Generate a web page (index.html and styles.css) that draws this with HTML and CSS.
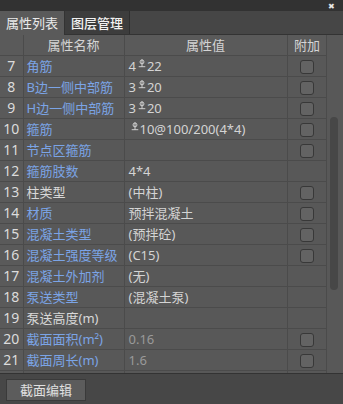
FILE: index.html
```html
<!doctype html>
<html>
<head>
<meta charset="UTF-8">
<title>属性列表</title>
<link rel="stylesheet" href="styles.css">
</head>
<body>
<div class="paneeli">
    <div class="otsikko"><span class="sulje">&#x2716;</span></div>

    <div class="valilehdet">
        <div class="valilehti aktiivinen">属性列表</div>
        <div class="valilehti">图层管理</div>
    </div>

    <div class="taulualue">
        <div class="taulukehys">
            <table class="ominaisuudet">
                <colgroup>
                    <col class="sarakeNro">
                    <col class="sarakeNimi">
                    <col class="sarakeArvo">
                    <col class="sarakeLisa">
                </colgroup>
                <tr class="otsakerivi">
                    <th></th>
                    <th>属性名称</th>
                    <th>属性值</th>
                    <th>附加</th>
                </tr>
                <tr><td class="nro">7</td><td class="nimi linkki">角筋</td><td class="arvo">4<svg class="teras" viewBox="0 0 9 10"><circle cx="4.5" cy="3.2" r="2.2"/><path d="M4.5 0.3V8.6M0.8 8.6H8.2"/></svg>22</td><td class="lisa"><span class="ruutu"></span></td></tr>
                <tr><td class="nro">8</td><td class="nimi linkki">B边一侧中部筋</td><td class="arvo">3<svg class="teras" viewBox="0 0 9 10"><circle cx="4.5" cy="3.2" r="2.2"/><path d="M4.5 0.3V8.6M0.8 8.6H8.2"/></svg>20</td><td class="lisa"><span class="ruutu"></span></td></tr>
                <tr><td class="nro">9</td><td class="nimi linkki">H边一侧中部筋</td><td class="arvo">3<svg class="teras" viewBox="0 0 9 10"><circle cx="4.5" cy="3.2" r="2.2"/><path d="M4.5 0.3V8.6M0.8 8.6H8.2"/></svg>20</td><td class="lisa"><span class="ruutu"></span></td></tr>
                <tr><td class="nro">10</td><td class="nimi linkki">箍筋</td><td class="arvo"><svg class="teras eka" viewBox="0 0 9 10"><circle cx="4.5" cy="3.2" r="2.2"/><path d="M4.5 0.3V8.6M0.8 8.6H8.2"/></svg>10@100/200(4*4)</td><td class="lisa"><span class="ruutu"></span></td></tr>
                <tr><td class="nro">11</td><td class="nimi linkki">节点区箍筋</td><td class="arvo"></td><td class="lisa"><span class="ruutu"></span></td></tr>
                <tr><td class="nro">12</td><td class="nimi linkki">箍筋肢数</td><td class="arvo">4*4</td><td class="lisa"></td></tr>
                <tr><td class="nro">13</td><td class="nimi">柱类型</td><td class="arvo">(中柱)</td><td class="lisa"><span class="ruutu"></span></td></tr>
                <tr><td class="nro">14</td><td class="nimi linkki">材质</td><td class="arvo">预拌混凝土</td><td class="lisa"><span class="ruutu"></span></td></tr>
                <tr><td class="nro">15</td><td class="nimi linkki">混凝土类型</td><td class="arvo">(预拌砼)</td><td class="lisa"><span class="ruutu"></span></td></tr>
                <tr><td class="nro">16</td><td class="nimi linkki">混凝土强度等级</td><td class="arvo">(C15)</td><td class="lisa"><span class="ruutu"></span></td></tr>
                <tr><td class="nro">17</td><td class="nimi linkki">混凝土外加剂</td><td class="arvo">(无)</td><td class="lisa"></td></tr>
                <tr><td class="nro">18</td><td class="nimi linkki">泵送类型</td><td class="arvo">(混凝土泵)</td><td class="lisa"></td></tr>
                <tr><td class="nro">19</td><td class="nimi">泵送高度(m)</td><td class="arvo"></td><td class="lisa"></td></tr>
                <tr><td class="nro">20</td><td class="nimi linkki">截面面积(m²)</td><td class="arvo harmaa">0.16</td><td class="lisa"><span class="ruutu"></span></td></tr>
                <tr><td class="nro">21</td><td class="nimi linkki">截面周长(m)</td><td class="arvo harmaa">1.6</td><td class="lisa"><span class="ruutu"></span></td></tr>
                <tr><td class="nro"></td><td class="nimi"></td><td class="arvo"></td><td class="lisa"></td></tr>
            </table>
        </div>
        <div class="vierityspalkki"><div class="kahva"></div></div>
    </div>

    <div class="alapalkki">
        <div class="nappi">截面编辑</div>
    </div>
</div>
</body>
</html>
```

FILE: styles.css
```css
body {
    margin: 0;
    background-color: #474747;
    font-family: "Noto Sans", "Noto Sans CJK SC", sans-serif;
    font-size: 13px;
    color: #d2d2d2;
}

.paneeli {
    width: 343px;
    height: 404px;
    display: flex;
    flex-direction: column;
    overflow: hidden;
}

.otsikko {
    height: 11px;
    background-color: #323232;
    display: flex;
    justify-content: flex-end;
}

.sulje {
    font-size: 8px;
    line-height: 11px;
    color: #e6e6e6;
    margin-right: 8px;
}

.valilehdet {
    height: 23px;
    background-color: #464646;
    border-bottom: 1px solid #333333;
    display: flex;
    font-family: "Noto Sans CJK SC", sans-serif;
}

.valilehti {
    width: 64px;
    line-height: 23px;
    text-align: center;
    color: #f2f2f2;
    background-color: #3d3d3d;
    border-right: 1px solid #2e2e2e;
    font-weight: 500;
}

.valilehti.aktiivinen {
    background-color: #5a5a5a;
    border-right: 1px solid #333333;
    font-weight: 400;
    color: #eaeaea;
    height: 24px;
}

.taulualue {
    height: 338px;
    display: flex;
    background-color: #585858;
    border-bottom: 1px solid #333333;
}

.taulukehys {
    width: 327px;
    overflow: hidden;
}

.ominaisuudet {
    border-collapse: collapse;
    table-layout: fixed;
    width: 327px;
}

.sarakeNro { width: 23px; }
.sarakeNimi { width: 101px; }
.sarakeArvo { width: 163px; }
.sarakeLisa { width: 40px; }

.ominaisuudet th,
.ominaisuudet td {
    height: 20px;
    padding: 0;
    line-height: 20px;
    border-right: 1px solid #4b4b4b;
    border-bottom: 1px solid #4b4b4b;
    white-space: nowrap;
    overflow: hidden;
}

.ominaisuudet th {
    font-family: "Noto Sans CJK SC", sans-serif;
    font-weight: 400;
    color: #d4d4d4;
    text-align: center;
    background-color: #5a5a5a;
}

.nro {
    text-align: center;
    font-size: 14px;
    color: #dcdcdc;
    background-color: #5a5a5a;
}

.nimi {
    padding-left: 3px !important;
    color: #d8d8d8;
}

.linkki {
    color: #7ba4e6;
}

.arvo {
    padding-left: 4px !important;
    color: #d4d4d4;
}

.harmaa {
    color: #9a9a9a;
}

.teras {
    width: 8px;
    height: 9px;
    margin: 0 1px 0 2px;
    vertical-align: 3px;
    fill: none;
    stroke: #dcdcdc;
    stroke-width: 1;
}

.teras.eka {
    margin-left: 2px;
}

.lisa {
    text-align: center;
}

.ruutu {
    display: inline-block;
    width: 12px;
    height: 12px;
    margin-top: 4px;
    vertical-align: top;
    background-color: #636363;
    border: 1px solid #383838;
    border-radius: 3px;
}

.vierityspalkki {
    width: 16px;
    border-left: 1px solid #4b4b4b;
    background-color: #585858;
}

.kahva {
    width: 8px;
    height: 173px;
    margin: 82px 0 0 3px;
    background-color: #474747;
    border-radius: 4px;
}

.alapalkki {
    flex: 1;
    background-color: #474747;
    padding: 5px 0 0 6px;
}

.nappi {
    width: 78px;
    height: 20px;
    line-height: 20px;
    text-align: center;
    background-color: #5c5c5c;
    border: 1px solid #3a3a3a;
    color: #e0e0e0;
    font-family: "Noto Sans CJK SC", sans-serif;
}
```
